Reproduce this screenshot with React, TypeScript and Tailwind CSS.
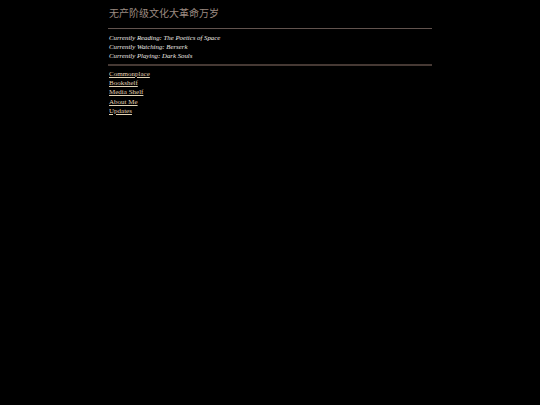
import React from "react";

export default function App() {
  const links = ["Commonplace", "Bookshelf", "Media Shelf", "About Me", "Updates"];
  return (
    <div className="min-h-[405px] w-full bg-black" style={{ fontFamily: '"Liberation Serif", "Noto Serif CJK SC", "Noto Sans CJK SC", serif' }}>
      <div className="mx-auto w-[324px] pt-[7px]">
        <div className="pl-[1px] text-[10px] leading-[12px] text-[#9c8a80]" style={{ fontFamily: '"Noto Sans CJK SC", sans-serif' }}>
          无产阶级文化大革命万岁
        </div>
        <div className="mt-[9px] h-px bg-[#62534e]" />
        <div className="mt-[4px] pl-[1px] text-[6.8px] italic leading-[9.2px] text-[#f0ece8]">
          <div>Currently Reading: The Poetics of Space</div>
          <div>Currently Watching: Berserk</div>
          <div>Currently Playing: Dark Souls</div>
        </div>
        <div className="mt-[3px] h-[2px] bg-[#463934]" />
        <div className="mt-[4px] flex flex-col pl-[1px] text-[7px] leading-[9.3px]">
          {links.map((l) => (
            <a key={l} href="#" className="w-fit text-[#e2d2b4] underline">
              {l}
            </a>
          ))}
        </div>
      </div>
    </div>
  );
}
